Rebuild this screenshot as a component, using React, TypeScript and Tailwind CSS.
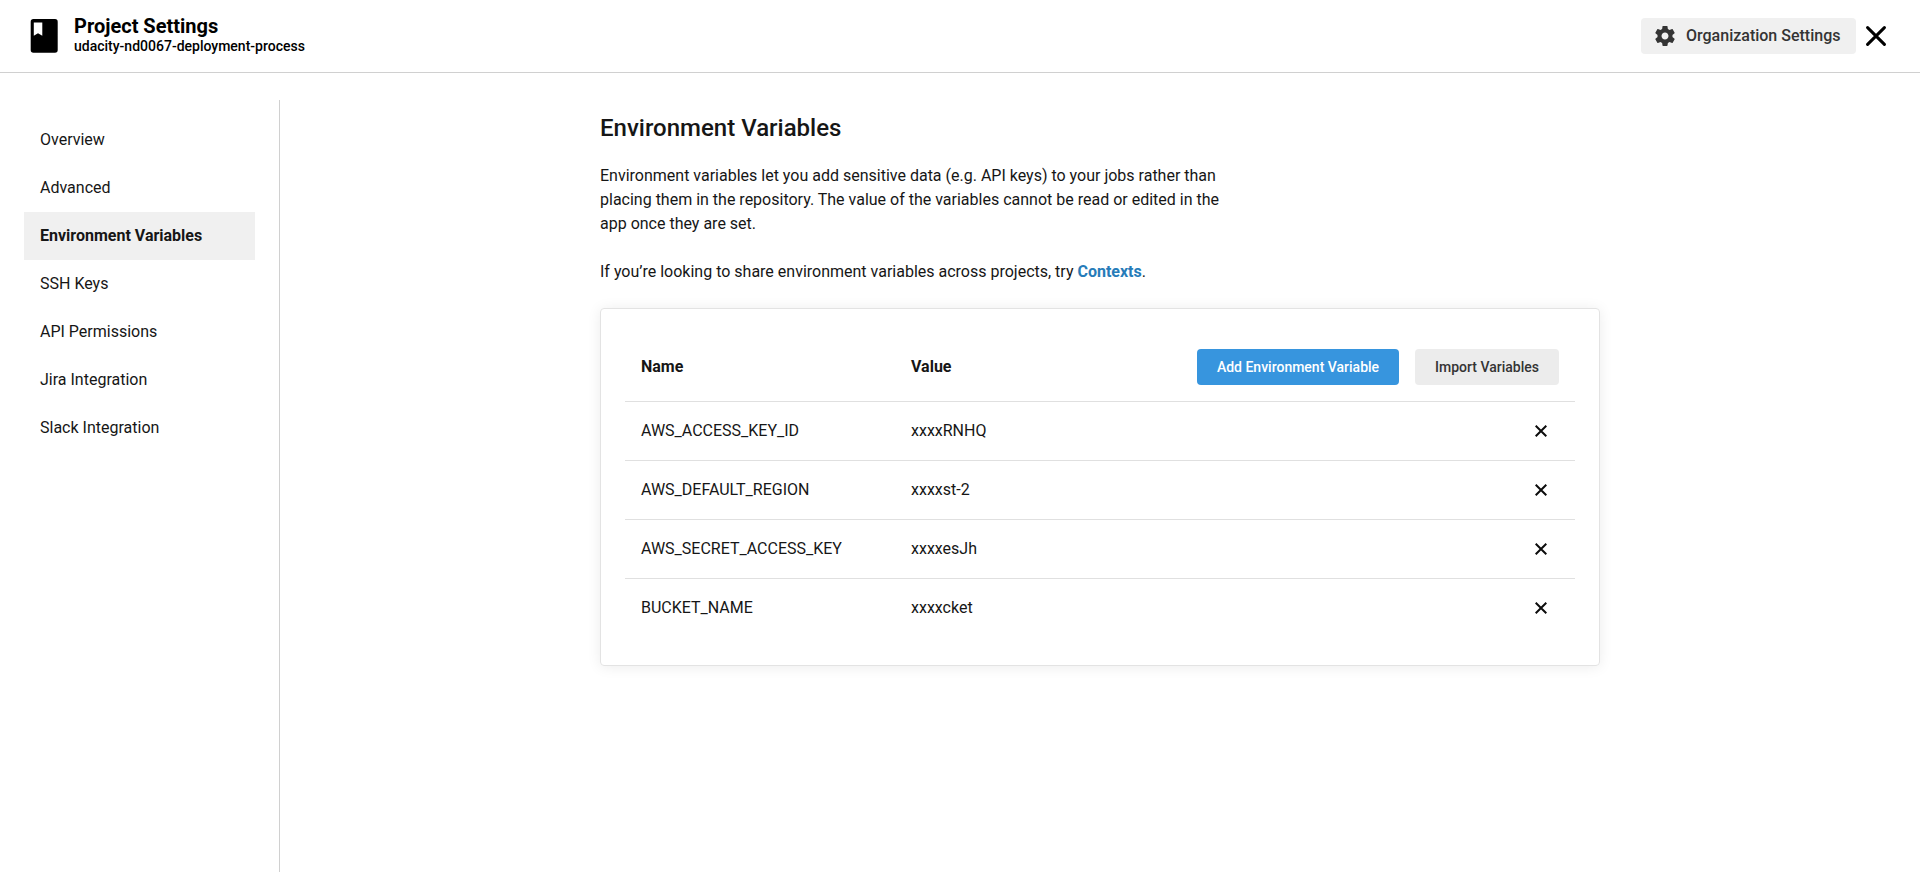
const NAV = [
  "Overview",
  "Advanced",
  "Environment Variables",
  "SSH Keys",
  "API Permissions",
  "Jira Integration",
  "Slack Integration",
];

const VARIABLES = [
  { name: "AWS_ACCESS_KEY_ID", value: "xxxxRNHQ" },
  { name: "AWS_DEFAULT_REGION", value: "xxxxst-2" },
  { name: "AWS_SECRET_ACCESS_KEY", value: "xxxxesJh" },
  { name: "BUCKET_NAME", value: "xxxxcket" },
];

function ProjectIcon() {
  return (
    <svg className="h-[34px] w-7" viewBox="0 0 28 34">
      <path
        fill="#000"
        fillRule="evenodd"
        d="M3.4 0h21.6a2.7 2.7 0 0 1 2.7 2.7v28.4a2.7 2.7 0 0 1-2.7 2.7H3.4a2.7 2.7 0 0 1-2.7-2.7V2.7A2.7 2.7 0 0 1 3.4 0zM3.8 3.4v13.3l4.2-2.5 4.3 2.5V3.4z"
      />
    </svg>
  );
}

function GearIcon() {
  return (
    <svg className="size-6" viewBox="0 0 24 24" fill="#343434">
      <path d="M19.43 12.98c.04-.32.07-.64.07-.98s-.03-.66-.07-.98l2.11-1.65c.19-.15.24-.42.12-.64l-2-3.46c-.12-.22-.39-.3-.61-.22l-2.49 1c-.52-.4-1.08-.73-1.69-.98l-.38-2.65C14.46 2.18 14.25 2 14 2h-4c-.25 0-.46.18-.49.42l-.38 2.65c-.61.25-1.17.59-1.69.98l-2.49-1c-.23-.09-.49 0-.61.22l-2 3.46c-.13.22-.07.49.12.64l2.11 1.65c-.04.32-.07.65-.07.98s.03.66.07.98l-2.11 1.65c-.19.15-.24.42-.12.64l2 3.46c.12.22.39.3.61.22l2.49-1c.52.4 1.08.73 1.69.98l.38 2.65c.03.24.24.42.49.42h4c.25 0 .46-.18.49-.42l.38-2.65c.61-.25 1.17-.59 1.69-.98l2.49 1c.23.09.49 0 .61-.22l2-3.46c.12-.22.07-.49-.12-.64l-2.11-1.65zM12 15.5c-1.93 0-3.5-1.57-3.5-3.5s1.57-3.5 3.5-3.5 3.5 1.57 3.5 3.5-1.57 3.5-3.5 3.5z" />
    </svg>
  );
}

function CloseIcon() {
  return (
    <svg className="size-5" viewBox="0 0 20 20" fill="none" stroke="#000" strokeWidth="3" strokeLinecap="round">
      <path d="M1.6 1.6l16.8 16.8M18.4 1.6L1.6 18.4" />
    </svg>
  );
}

function RemoveIcon() {
  return (
    <svg className="size-3" viewBox="0 0 12 12" fill="none" stroke="#0c0c0c" strokeWidth="2">
      <path d="M.7 .7l10.6 10.6M11.3 .7L.7 11.3" />
    </svg>
  );
}

export default function App() {
  return (
    <div className="flex h-[896px] flex-col bg-white font-['Roboto',sans-serif] text-base text-[#161616]">
      <header className="flex h-[73px] shrink-0 items-center justify-between border-b border-[#d0d0d0] pr-[34px] pl-[30px] text-black">
        <div className="flex items-center gap-4">
          <ProjectIcon />
          <div className="-mt-1">
            <h1 className="text-xl leading-6 font-bold">Project Settings</h1>
            <p className="text-sm leading-4 font-medium">udacity-nd0067-deployment-process</p>
          </div>
        </div>
        <div className="flex items-center gap-[10px]">
          <button className="flex h-9 w-[215px] items-center gap-[9px] rounded bg-[#f0f0f0] pl-3 font-medium text-[#343434]">
            <GearIcon />
            Organization Settings
          </button>
          <button aria-label="Close">
            <CloseIcon />
          </button>
        </div>
      </header>

      <div className="flex flex-1 pt-[27px] pb-6">
        <nav className="w-[280px] shrink-0 border-r border-[#d0d0d0] px-6 pt-4">
          {NAV.map((item) => (
            <a
              key={item}
              className={
                item === "Environment Variables"
                  ? "flex h-12 items-center bg-[#f0f0f0] px-4 font-bold"
                  : "flex h-12 items-center px-4"
              }
            >
              {item}
            </a>
          ))}
        </nav>

        <main className="ml-[320px] w-[1000px] pt-3">
          <h2 className="text-2xl leading-8 font-medium">Environment Variables</h2>
          <p className="mt-5 w-[632px] leading-6">
            Environment variables let you add sensitive data (e.g. API keys) to your jobs rather than placing them in
            the repository. The value of the variables cannot be read or edited in the app once they are set.
          </p>
          <p className="mt-6 leading-6">
            If you’re looking to share environment variables across projects, try{" "}
            <a className="font-bold text-[#267cb9]">Contexts</a>.
          </p>

          <section className="mt-6 h-[358px] rounded border border-[#e3e3e3] px-6 pt-6 shadow-[0_1px_14px_rgba(0,0,0,0.08)]">
            <div className="flex h-[69px] items-center border-b border-[#e0e0e0] px-4">
              <div className="w-[270px] font-bold">Name</div>
              <div className="flex-1 font-bold">Value</div>
              <div className="flex gap-4 text-sm font-medium">
                <button className="h-9 w-[202px] rounded bg-[#3795de] text-white">Add Environment Variable</button>
                <button className="h-9 w-36 rounded bg-[#ececec] text-[#343434]">Import Variables</button>
              </div>
            </div>
            {VARIABLES.map((variable) => (
              <div
                key={variable.name}
                className="flex h-[59px] items-center border-b border-[#e0e0e0] pr-7 pl-4 last:border-transparent"
              >
                <div className="w-[270px]">{variable.name}</div>
                <div className="flex-1">{variable.value}</div>
                <button aria-label={"Remove " + variable.name}>
                  <RemoveIcon />
                </button>
              </div>
            ))}
          </section>
        </main>
      </div>
    </div>
  );
}
